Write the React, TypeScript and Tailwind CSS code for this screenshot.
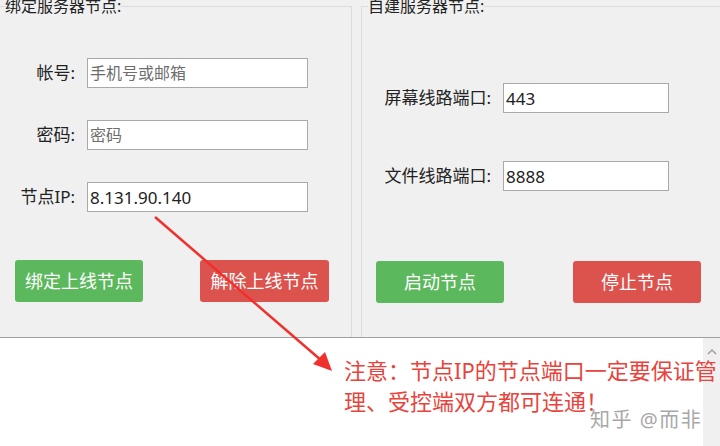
import React from 'react';

const font = { fontFamily: '"Noto Sans", "Noto Sans CJK SC", sans-serif' };

function Field({ label, value, placeholder, labelW, inputW }: { label: string; value?: string; placeholder?: string; labelW: string; inputW: string }) {
  return (
    <div className="flex items-center">
      <span className={`${labelW} text-right text-[17px] text-[#222] pr-[12px]`}>{label}</span>
      <div className={`${inputW} h-[30px] bg-white border border-[#a9a9a9] flex items-center pl-[2px] text-[17px] leading-none`}>
        {value ? <span className="text-[#222]">{value}</span> : <span className="text-[#6d6d6d] text-[16px]">{placeholder}</span>}
      </div>
    </div>
  );
}

function Btn({ children, color, w }: { children: React.ReactNode; color: 'green' | 'red'; w: string }) {
  return (
    <button
      className={`${w} h-[42px] rounded-[3px] text-white text-[18px] ${color === 'green' ? 'bg-[#5cb85c]' : 'bg-[#dc524d]'}`}
    >
      {children}
    </button>
  );
}

export default function App() {
  return (
    <div className="relative w-[720px] h-[446px] overflow-hidden bg-[#f0f0f0]" style={font}>
      <div className="h-[338px] flex border-b border-[#a0a0a0]">
        {/* 绑定服务器节点 */}
        <div className="relative w-[352px] mt-[6px] border-t border-r border-[#dcdcdc]">
          <span className="absolute -top-[11px] left-[5px] bg-[#f0f0f0] text-[16px] text-[#222] leading-[20px]">绑定服务器节点:</span>
          <div className="pt-[51px] flex flex-col gap-[32px]">
            <Field label="帐号:" placeholder="手机号或邮箱" labelW="w-[87px]" inputW="w-[221px]" />
            <Field label="密码:" placeholder="密码" labelW="w-[87px]" inputW="w-[221px]" />
            <Field label="节点IP:" value="8.131.90.140" labelW="w-[87px]" inputW="w-[221px]" />
          </div>
          <div className="flex justify-between pl-[15px] pr-[22px] mt-[48px]">
            <Btn color="green" w="w-[128px]">绑定上线节点</Btn>
            <Btn color="red" w="w-[129px]">解除上线节点</Btn>
          </div>
        </div>
        {/* 自建服务器节点 */}
        <div className="relative flex-1 ml-[9px] mt-[6px] border-t border-l border-[#dcdcdc]">
          <span className="absolute -top-[11px] left-[6px] bg-[#f0f0f0] text-[16px] text-[#222] leading-[20px]">自建服务器节点:</span>
          <div className="pt-[76px] flex flex-col gap-[48px]">
            <Field label="屏幕线路端口:" value="443" labelW="w-[141px]" inputW="w-[166px]" />
            <Field label="文件线路端口:" value="8888" labelW="w-[141px]" inputW="w-[166px]" />
          </div>
          <div className="flex justify-between pl-[14px] pr-[19px] mt-[70px]">
            <Btn color="green" w="w-[128px]">启动节点</Btn>
            <Btn color="red" w="w-[128px]">停止节点</Btn>
          </div>
        </div>
      </div>
      <div className="h-[108px] flex">
        <div className="flex-1 bg-white" />
        <div className="w-[17px] bg-[#f0f0f0] flex justify-center pt-[10px]">
          <svg width="10" height="7" viewBox="0 0 10 7">
            <path d="M1 6 L5 2 L9 6" fill="none" stroke="#a0a0a0" strokeWidth="1.5" />
          </svg>
        </div>
      </div>

      {/* annotation */}
      <svg className="absolute inset-0 pointer-events-none" width="720" height="446">
        <line x1="155" y1="217" x2="322" y2="361" stroke="#f0302d" strokeWidth="2.5" />
        <polygon points="332,371 313,364 325,352" fill="#f0302d" />
      </svg>
      <div className="absolute left-[344px] top-[355px] text-[22px] leading-[31px] text-[#e8433c] whitespace-nowrap">
        注意：节点IP的节点端口一定要保证管
        <br />
        理、受控端双方都可连通！
      </div>
      <div className="absolute left-[590px] top-[405px] text-[20px] text-[#a8a8a8] tracking-[1.5px]">知乎 @而非</div>
    </div>
  );
}
